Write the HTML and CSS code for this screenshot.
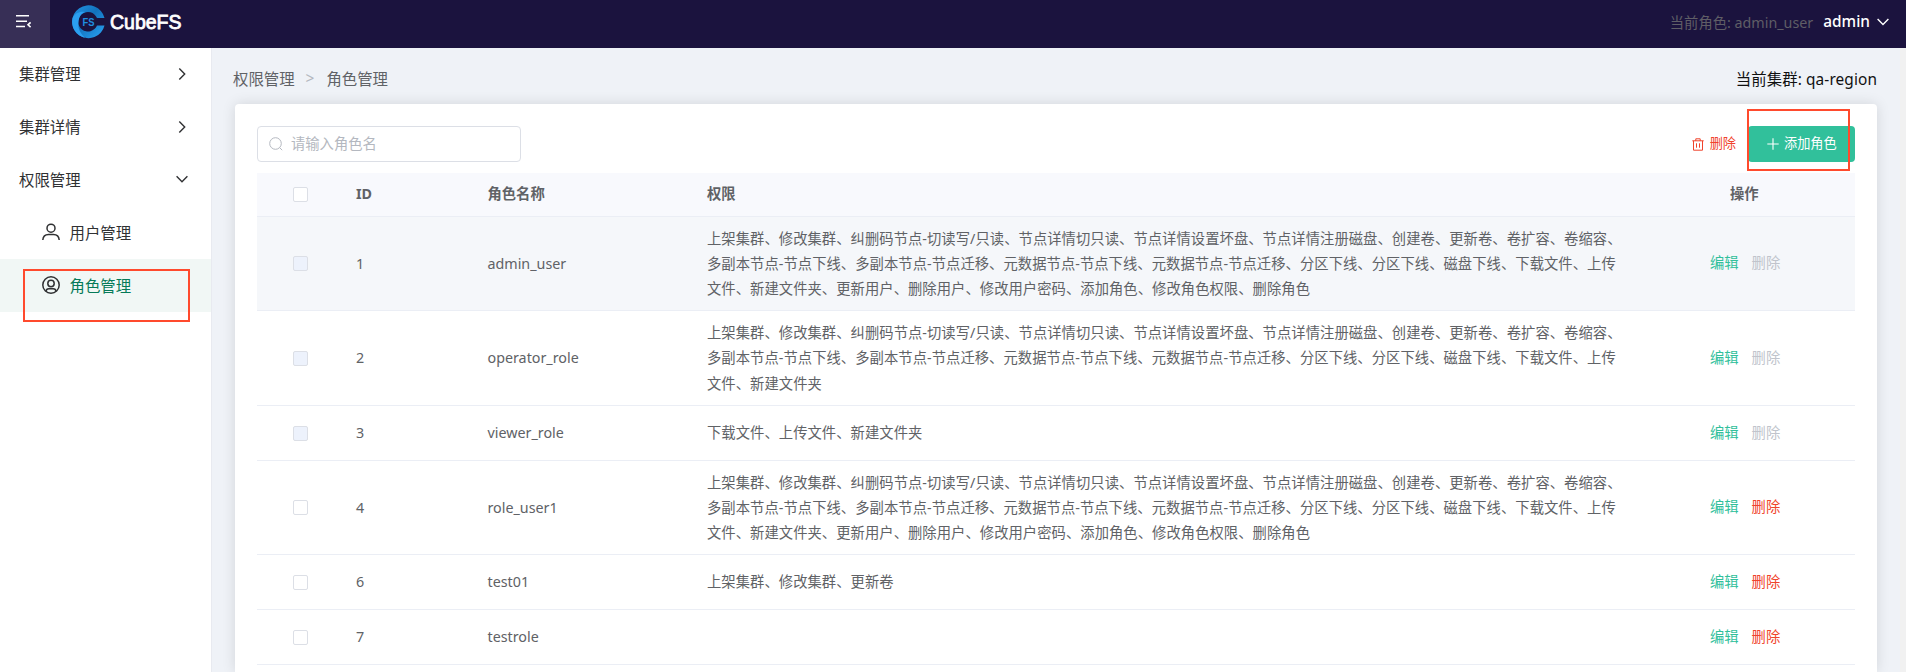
FILE: index.html
```html
<!DOCTYPE html>
<html lang="zh-CN">
<head>
<meta charset="utf-8">
<title>CubeFS</title>
<link rel="stylesheet" href="styles.css">
</head>
<body>
<header class="topbar">
  <div class="toggle">
    <svg width="16" height="14" viewBox="0 0 16 14" fill="none" stroke="#fff" stroke-width="1.6"><path d="M0 1.800h13M0 7.200h11M0 12.500h9"/><path d="M14.600 8.400l-2.600 2.400 2.600 2.400"/></svg>
  </div>
  <div class="logo">
    <svg width="33" height="34" viewBox="0 0 33 34">
      <defs><linearGradient id="ring" x1="0" y1="0" x2="1" y2="1"><stop offset="0" stop-color="#2496e6"/><stop offset=".45" stop-color="#1272bd"/><stop offset="1" stop-color="#2aa4f4"/></linearGradient></defs>
      <path d="M32.500 13A16.400 16.400 0 1 0 32.500 20.500H25A9.800 9.800 0 1 1 25 13z" fill="url(#ring)"/>
      <path d="M.6 13A16.400 16.400 0 0 0 13 33C8 28 5.500 23 6.500 17C7 12 9 8.500 13 7C8 6 3 8 .6 13z" fill="#2b9ff0"/>
      <text class="logo-mark" x="10.500" y="21" textLength="12" lengthAdjust="spacingAndGlyphs">FS</text>
    </svg>
    <span class="logo-name">CubeFS</span>
  </div>
  <div class="account">
    <span class="account-role">当前角色: admin_user</span>
    <span class="account-name">admin</span>
    <svg width="12" height="8" viewBox="0 0 12 8" fill="none" stroke="#fff" stroke-width="1.400"><path d="M.6 1l5.400 5.400L11.400 1"/></svg>
  </div>
</header>
<div class="body">
  <nav class="sidebar">
    <div class="menu-item">集群管理<svg class="arrow" width="12" height="12" viewBox="0 0 12 12"><path d="M3.300.6l5.400 5.400-5.400 5.400"/></svg></div>
    <div class="menu-item">集群详情<svg class="arrow" width="12" height="12" viewBox="0 0 12 12"><path d="M3.300.6l5.400 5.400-5.400 5.400"/></svg></div>
    <div class="menu-item">权限管理<svg class="arrow" width="12" height="12" viewBox="0 0 12 12"><path d="M.6 3.300l5.400 5.400 5.400-5.400"/></svg></div>
    <div class="menu-item sub"><svg class="icon" width="18" height="18" viewBox="0 0 18 18"><circle cx="9" cy="5.200" r="4"/><path d="M.8 17c.3-4 3-5.600 5.700-5.600h5c2.700 0 5.400 1.600 5.700 5.600"/></svg>用户管理</div>
    <div class="menu-item sub active"><svg class="icon" width="18" height="18" viewBox="0 0 18 18"><circle cx="9" cy="9" r="8.200"/><circle cx="9" cy="7.500" r="3.200"/><path d="M4 15.500c.2-2 1.500-2.700 2.800-2.700h4.400c1.300 0 2.600.7 2.800 2.700"/></svg>角色管理</div>
    <div class="mark mark-menu"></div>
  </nav>
  <main class="main">
    <div class="crumbs"><span>权限管理</span><span class="sep">&gt;</span><span>角色管理</span><span class="cluster">当前集群: qa-region</span></div>
    <section class="card">
      <div class="tools">
        <div class="search"><svg width="14" height="14" viewBox="0 0 14 14" fill="none" stroke="#b4b8c0" stroke-width="1"><circle cx="6.500" cy="6.500" r="5.800"/><path d="M10.700 10.700l2.500 2.500"/></svg><span>请输入角色名</span></div>
        <div class="bulk-delete"><svg width="12" height="13" viewBox="0 0 12 13" fill="none" stroke="#f0432c" stroke-width="1"><path d="M.3 2.800h11.400M3.800 2.800V.8h4.400v2M1.500 2.800v9.400h9V2.800M4.500 5.300v4.400M7.500 5.300v4.400"/></svg><span>删除</span></div>
        <div class="add"><svg width="12" height="12" viewBox="0 0 12 12" stroke="#fff" stroke-width="1.100"><path d="M6 .3v11.400M.3 6h11.400"/></svg><span>添加角色</span><div class="mark mark-add"></div></div>
      </div>
      <div class="table">
        <div class="row head"><i class="box"></i><span>ID</span><span>角色名称</span><span>权限</span><span class="ops">操作</span></div>
        <div class="row tall hover"><i class="box off"></i><span>1</span><span>admin_user</span><p>上架集群、修改集群、纠删码节点-切读写/只读、节点详情切只读、节点详情设置坏盘、节点详情注册磁盘、创建卷、更新卷、卷扩容、卷缩容、多副本节点-节点下线、多副本节点-节点迁移、元数据节点-节点下线、元数据节点-节点迁移、分区下线、分区下线、磁盘下线、下载文件、上传文件、新建文件夹、更新用户、删除用户、修改用户密码、添加角色、修改角色权限、删除角色</p><span class="ops"><a class="edit">编辑</a><a class="muted">删除</a></span></div>
        <div class="row taller"><i class="box off"></i><span>2</span><span>operator_role</span><p>上架集群、修改集群、纠删码节点-切读写/只读、节点详情切只读、节点详情设置坏盘、节点详情注册磁盘、创建卷、更新卷、卷扩容、卷缩容、多副本节点-节点下线、多副本节点-节点迁移、元数据节点-节点下线、元数据节点-节点迁移、分区下线、分区下线、磁盘下线、下载文件、上传文件、新建文件夹</p><span class="ops"><a class="edit">编辑</a><a class="muted">删除</a></span></div>
        <div class="row"><i class="box off"></i><span>3</span><span>viewer_role</span><p>下载文件、上传文件、新建文件夹</p><span class="ops"><a class="edit">编辑</a><a class="muted">删除</a></span></div>
        <div class="row tall"><i class="box"></i><span>4</span><span>role_user1</span><p>上架集群、修改集群、纠删码节点-切读写/只读、节点详情切只读、节点详情设置坏盘、节点详情注册磁盘、创建卷、更新卷、卷扩容、卷缩容、多副本节点-节点下线、多副本节点-节点迁移、元数据节点-节点下线、元数据节点-节点迁移、分区下线、分区下线、磁盘下线、下载文件、上传文件、新建文件夹、更新用户、删除用户、修改用户密码、添加角色、修改角色权限、删除角色</p><span class="ops"><a class="edit">编辑</a><a class="danger">删除</a></span></div>
        <div class="row"><i class="box"></i><span>6</span><span>test01</span><p>上架集群、修改集群、更新卷</p><span class="ops"><a class="edit">编辑</a><a class="danger">删除</a></span></div>
        <div class="row"><i class="box"></i><span>7</span><span>testrole</span><p></p><span class="ops"><a class="edit">编辑</a><a class="danger">删除</a></span></div>
      </div>
    </section>
  </main>
  <div class="scrollbar"></div>
</div>
</body>
</html>
```

FILE: styles.css
```css
* { box-sizing: border-box; }
body {
  margin: 0;
  height: 672px;
  overflow: hidden;
  display: flex;
  flex-direction: column;
  font-family: "Noto Sans", "Noto Sans CJK SC", sans-serif;
  font-size: 14.3px;
  color: #606266;
}
svg { flex: none; display: block; }
.topbar {
  flex: none;
  height: 48px;
  display: flex;
  align-items: center;
  background: #1b133e;
}
.toggle {
  width: 50px;
  height: 48px;
  padding: 14px 0 0 16px;
  background: #372f56;
}
.logo { display: flex; align-items: center; gap: 5px; padding: 0 0 5px 22px; }
.logo-mark { font: bold 11px "Liberation Sans", sans-serif; fill: #1f8ee0; }
.logo-name {
  font: 19.5px/30px "Liberation Sans", sans-serif;
  -webkit-text-stroke: .8px #fff;
  color: #fff;
}
.account {
  margin-left: auto;
  padding: 0 17px 5px 0;
  display: flex;
  align-items: center;
}
.account-role { color: #5f5e66; margin-right: 10px; padding-bottom: 1px; }
.account-name { color: #fff; font-size: 15.4px; font-weight: 500; margin-right: 7px; }
.body { flex: 1; min-height: 0; display: flex; }
.sidebar {
  position: relative;
  flex: none;
  width: 211px;
  background: #fff;
  font-size: 15.4px;
  color: #303133;
}
.menu-item {
  height: 52.8px;
  padding: 0 23.5px 1px 19px;
  display: flex;
  align-items: center;
}
.arrow {
  margin-left: auto;
  fill: none;
  stroke: #303133;
  stroke-width: 1.4;
}
.sub { padding-left: 42px; gap: 9.5px; }
.icon { fill: none; stroke: #303133; stroke-width: 1.5; }
.active { background: #f1f7f5; color: #067a58; }
.mark { position: absolute; border: 2px solid #ff4a2d; }
.mark-menu { left: 23px; top: 221px; width: 167px; height: 53px; }
.mark-add { left: -1px; top: -17px; width: 103px; height: 62px; }
.main {
  flex: 1;
  min-width: 0;
  padding: 0 23px 0 23px;
  border-left: 1px solid #e8eaf0;
  background: #eff2f7;
  display: flex;
  flex-direction: column;
}
.crumbs {
  flex: none;
  height: 56px;
  padding: 4px 0 0;
  margin-left: -2px;
  display: flex;
  align-items: center;
  font-size: 15.4px;
}
.sep { margin: 0 12px 0 11px; color: #b4b8c0; }
.cluster { margin-left: auto; color: #111; letter-spacing: .1px; }
.card {
  flex: 1;
  min-height: 0;
  padding: 22px 22px 0;
  background: #fff;
  border-radius: 4px 4px 0 0;
  box-shadow: 0 0 14px rgba(0, 0, 0, .12);
}
.tools { display: flex; align-items: center; height: 36px; margin-bottom: 11px; }
.tools span { padding-bottom: 3px; }
.search {
  width: 264px;
  height: 36px;
  padding-left: 11px;
  display: flex;
  align-items: center;
  gap: 8px;
  border: 1px solid #dcdfe6;
  border-radius: 4px;
  color: #b4b8c0;
}
.bulk-delete {
  margin-left: auto;
  margin-right: 12px;
  display: flex;
  align-items: center;
  gap: 6px;
  font-size: 13.2px;
  color: #f0432c;
}
.add {
  position: relative;
  width: 107px;
  height: 36px;
  padding-left: 19px;
  display: flex;
  align-items: center;
  gap: 5px;
  border-radius: 4px;
  background: #31c09b;
  color: #fff;
  font-size: 13.2px;
}
.row {
  height: 55px;
  display: grid;
  grid-template-columns: 99px 131.5px 219.5px 919px 1fr;
  align-items: center;
  border-bottom: 1px solid #ebeef5;
  line-height: 25.3px;
}
.row p { margin: 0; padding-right: 3px; letter-spacing: .06px; }
.tall { height: 94px; }
.taller { height: 95px; }
.head { height: 44px; padding-bottom: 1px; background: #f8f9fd; font-weight: bold; }
.hover { background: #f5f7fa; }
.box {
  width: 15px;
  height: 15px;
  margin-left: 36px;
  border: 1px solid #dcdfe6;
  border-radius: 2px;
  background: #fff;
}
.off { background: #edf2fc; }
.ops { display: flex; gap: 13px; padding: 0 0 1px 84px; }
.head .ops { padding-left: 104px; }
.edit { color: #31c09b; }
.muted { color: #c0c4cc; }
.danger { color: #f0432c; }
.scrollbar { flex: none; width: 6px; background: #f1f1f1; }
```
